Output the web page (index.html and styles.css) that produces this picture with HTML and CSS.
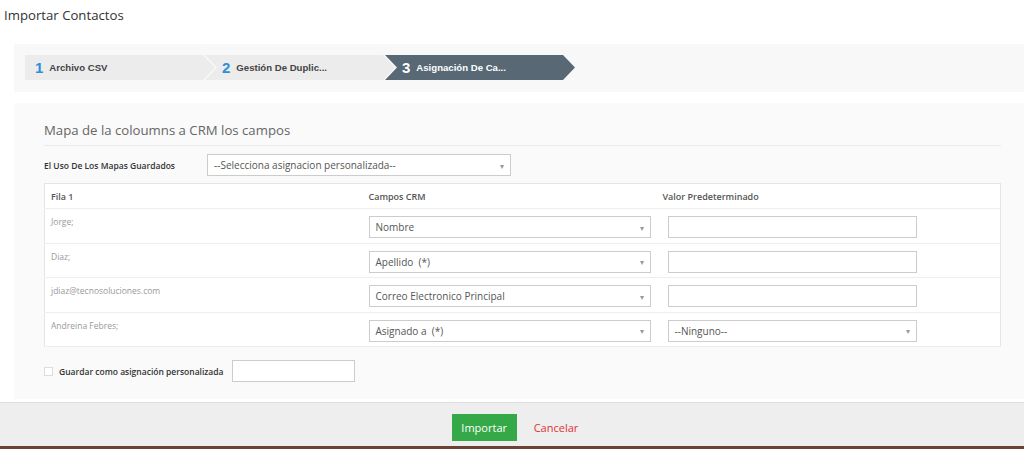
FILE: index.html
```html
<!DOCTYPE html>
<html lang="es">

<head>
	<meta charset="UTF-8">
	<meta name="viewport" content="width=device-width, initial-scale=1.0">
	<title>Importar Contactos</title>
	<link rel="stylesheet" href="styles.css">
</head>

<body>
	<h1 class="page-title">Importar Contactos</h1>

	<div class="wizard">
		<ul class="steps">
			<li class="step"><span class="num">1</span>Archivo CSV</li>
			<li class="step"><span class="num">2</span>Gestión De Duplic...</li>
			<li class="step active"><span class="num">3</span>Asignación De Ca...</li>
		</ul>
	</div>

	<div class="panel">
		<h3 class="panel-title">Mapa de la coloumns a CRM los campos</h3>

		<div class="saved-maps">
			<label class="field-label">El Uso De Los Mapas Guardados</label>
			<div class="select select-maps">
				<span>--Selecciona asignacion personalizada--</span>
				<span class="caret">▾</span>
			</div>
		</div>

		<table class="map-table">
			<thead>
				<tr>
					<th class="col-row">Fila 1</th>
					<th class="col-crm">Campos CRM</th>
					<th>Valor Predeterminado</th>
				</tr>
			</thead>
			<tbody>
				<tr>
					<td class="csv-value">Jorge;</td>
					<td>
						<div class="select select-crm"><span>Nombre</span><span class="caret">▾</span></div>
					</td>
					<td><div class="text-input default-input"></div></td>
				</tr>
				<tr>
					<td class="csv-value">Diaz;</td>
					<td>
						<div class="select select-crm"><span>Apellido &nbsp;(*)</span><span class="caret">▾</span></div>
					</td>
					<td><div class="text-input default-input"></div></td>
				</tr>
				<tr>
					<td class="csv-value">jdiaz@tecnosoluciones.com</td>
					<td>
						<div class="select select-crm"><span>Correo Electronico Principal</span><span class="caret">▾</span></div>
					</td>
					<td><div class="text-input default-input"></div></td>
				</tr>
				<tr>
					<td class="csv-value">Andreina Febres;</td>
					<td>
						<div class="select select-crm"><span>Asignado a &nbsp;(*)</span><span class="caret">▾</span></div>
					</td>
					<td>
						<div class="select default-input"><span>--Ninguno--</span><span class="caret">▾</span></div>
					</td>
				</tr>
			</tbody>
		</table>

		<div class="save-map">
			<span class="checkbox"></span>
			<label class="field-label">Guardar como asignación personalizada</label>
			<div class="text-input save-name"></div>
		</div>
	</div>

	<div class="footer">
		<button class="btn-import">Importar</button>
		<a class="cancel-link" href="#">Cancelar</a>
	</div>
</body>

</html>
```

FILE: styles.css
```css
* {
	box-sizing: border-box;
}

body {
	margin: 0;
	background-color: #fff;
	font-family: "Open Sans", "Liberation Sans", sans-serif;
	color: #555;
	height: 449px;
	display: flex;
	flex-direction: column;
}

.page-title {
	font-size: 13.2px;
	font-weight: 400;
	color: #333;
	margin: 0;
	padding: 6px 4px 0;
	height: 44px;
}

/* wizard steps */
.wizard {
	margin-left: 14px;
	background-color: #f8f8f8;
	padding: 11px 11px 12px;
}

.steps {
	list-style: none;
	margin: 0;
	padding: 0;
	display: flex;
}

.step {
	width: 190px;
	height: 25px;
	display: flex;
	align-items: center;
	padding-left: 17px;
	background-color: #ececec;
	color: #444;
	font-family: "Liberation Sans", Arial, sans-serif;
	font-size: 9.6px;
	font-weight: bold;
	clip-path: polygon(0 0, calc(100% - 12px) 0, 100% 50%, calc(100% - 12px) 100%, 0 100%, 12px 50%);
	margin-left: -10px;
}

.step:first-child {
	margin-left: 0;
	padding-left: 10px;
	clip-path: polygon(0 0, calc(100% - 12px) 0, 100% 50%, calc(100% - 12px) 100%, 0 100%);
}

.step .num {
	color: #2c8fd8;
	font-size: 15px;
	margin-right: 6px;
}

.step.active {
	background-color: #586875;
	color: #fff;
}

.step.active .num {
	color: #fff;
}

/* mapping panel */
.panel {
	margin: 11px 0 0 14px;
	background-color: #fafafa;
	padding: 18px 23px 17px 30px;
}

.panel-title {
	font-size: 13.2px;
	font-weight: 400;
	color: #666;
	margin: 0;
	padding-bottom: 6px;
	border-bottom: 1px solid #ebebeb;
}

.field-label {
	font-size: 8.5px;
	font-weight: 600;
	color: #333;
}

.saved-maps {
	display: flex;
	align-items: center;
	margin-top: 8px;
}

.saved-maps .field-label {
	width: 163px;
}

.select,
.text-input {
	height: 22px;
	background-color: #fff;
	border: 1px solid #ccc;
}

.select {
	display: flex;
	align-items: center;
	justify-content: space-between;
	padding: 0 6px;
	font-size: 10px;
	color: #555;
}

.select .caret {
	font-size: 8px;
	color: #999;
}

.select-maps {
	width: 304px;
}

.map-table {
	width: 957px;
	margin-top: 7px;
	border-collapse: collapse;
	background-color: #fff;
	border: 1px solid #e5e5e5;
}

.map-table th {
	text-align: left;
	font-size: 9px;
	font-weight: 600;
	color: #555;
	height: 25px;
	padding: 0 6px;
	border-bottom: 1px solid #eee;
}

.map-table td {
	height: 34.5px;
	padding: 7px 6px 0;
	vertical-align: top;
	border-bottom: 1px solid #eee;
}

.map-table .col-row {
	width: 318px;
}

.map-table .col-crm {
	width: 294px;
}

.csv-value {
	font-size: 8.5px;
	color: #999;
}

.select-crm {
	width: 282px;
}

.default-input {
	width: 249px;
	margin-left: 5px;
}

.save-map {
	display: flex;
	align-items: center;
	margin-top: 13px;
}

.checkbox {
	width: 9px;
	height: 9px;
	border: 1px solid #ddd;
	background-color: #fff;
	margin-right: 6px;
}

.save-map .field-label {
	margin-right: 8px;
}

.save-name {
	width: 123px;
}

/* footer */
.footer {
	margin-top: 3px;
	flex: 1;
	background-color: #eeeeee;
	border-top: 1px solid #ddd;
	border-bottom: 3px solid #6b4234;
	display: flex;
	justify-content: center;
	align-items: center;
	padding: 5px 0 0 6px;
}

.btn-import {
	background-color: #35a947;
	border: none;
	color: #fff;
	font-family: inherit;
	font-size: 11px;
	width: 65px;
	height: 27px;
	cursor: pointer;
}

.cancel-link {
	color: #dd3333;
	font-size: 11px;
	text-decoration: none;
	margin-left: 17px;
}
```
